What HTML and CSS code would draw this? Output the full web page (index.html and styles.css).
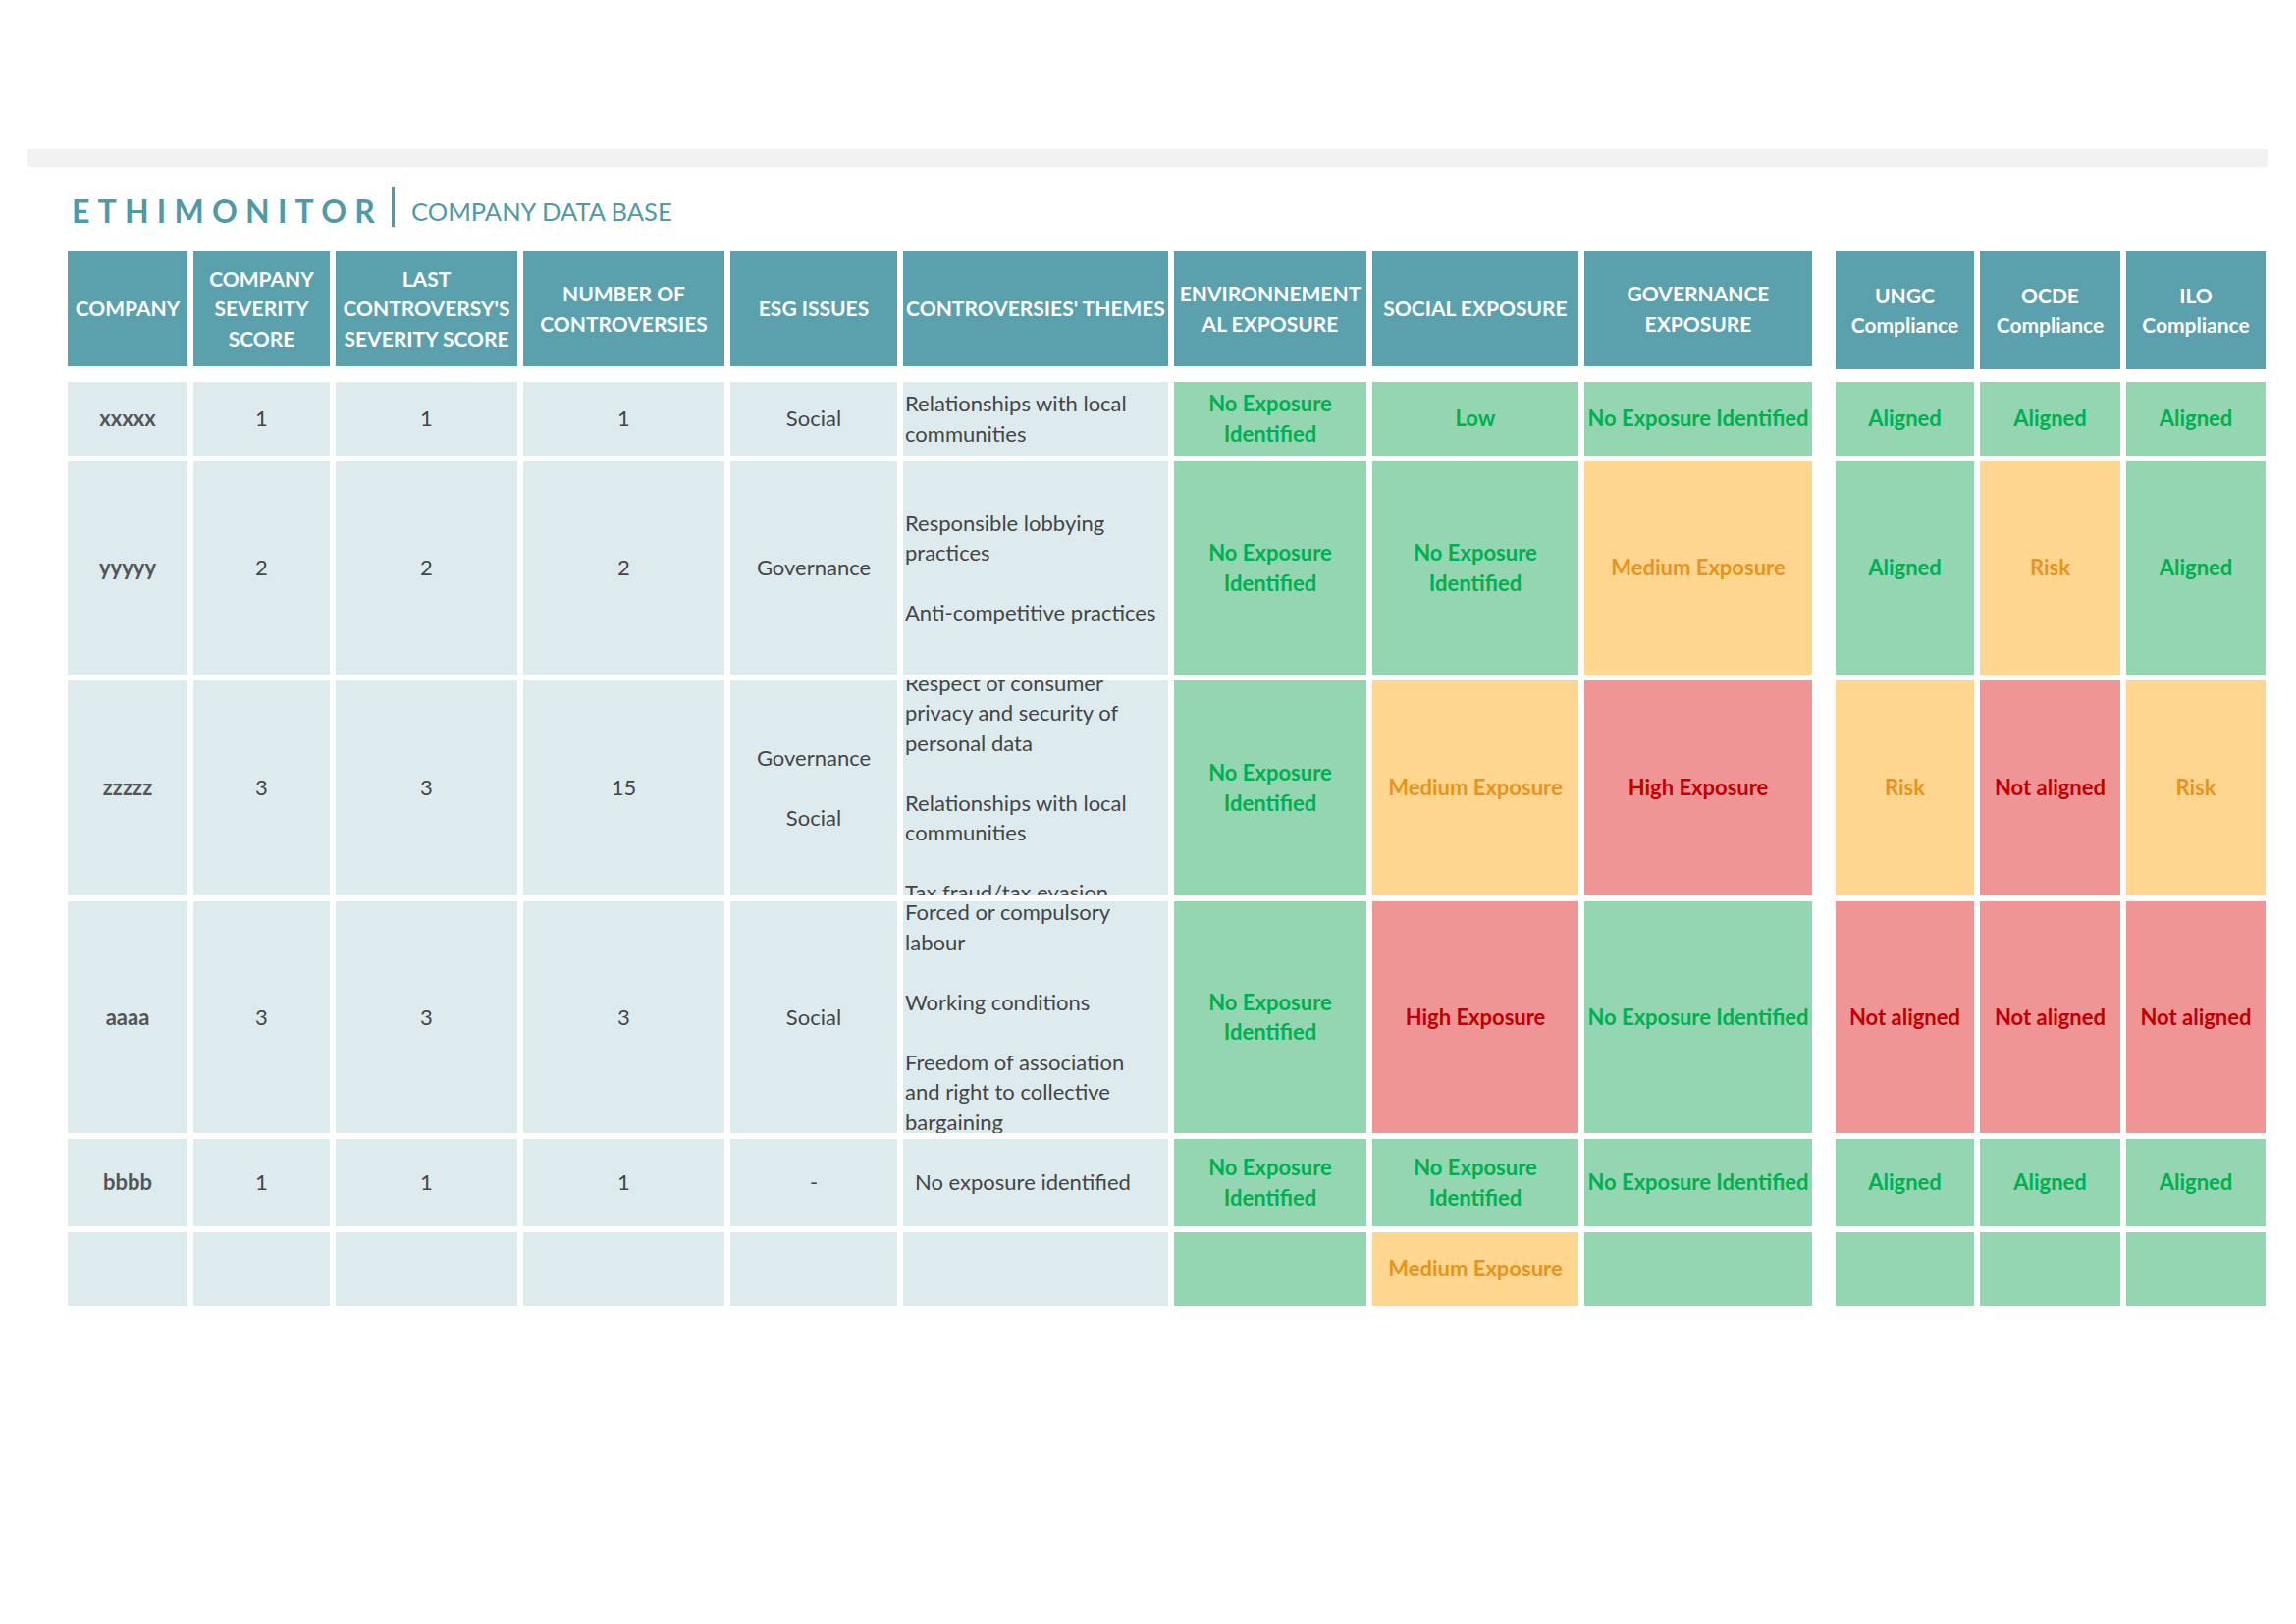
FILE: index.html
```html
<!DOCTYPE html>
<html lang="en">
<head>
<meta charset="utf-8">
<title>Ethimonitor – Company Data Base</title>
<link rel="stylesheet" href="styles.css">
</head>
<body>
<div class="page">
  <div class="topband"></div>
  <div class="brand">
    <span class="brand-name">ETHIMONITOR</span>
    <span class="brand-sep"></span>
    <span class="brand-sub">COMPANY DATA BASE</span>
  </div>

  <div class="board">
    <div class="grid grid-main">
      <div class="cell th">COMPANY</div>
      <div class="cell th">COMPANY<br>SEVERITY<br>SCORE</div>
      <div class="cell th">LAST<br>CONTROVERSY'S<br>SEVERITY SCORE</div>
      <div class="cell th">NUMBER OF<br>CONTROVERSIES</div>
      <div class="cell th">ESG ISSUES</div>
      <div class="cell th">CONTROVERSIES' THEMES</div>
      <div class="cell th">ENVIRONNEMENT<br>AL EXPOSURE</div>
      <div class="cell th">SOCIAL EXPOSURE</div>
      <div class="cell th">GOVERNANCE<br>EXPOSURE</div>

      <div class="cell td td-name">xxxxx</div>
      <div class="cell td">1</div>
      <div class="cell td">1</div>
      <div class="cell td">1</div>
      <div class="cell td">Social</div>
      <div class="cell td td-themes"><div><p>Relationships with local<br>communities</p></div></div>
      <div class="cell st st-green">No Exposure<br>Identified</div>
      <div class="cell st st-green">Low</div>
      <div class="cell st st-green">No Exposure Identified</div>

      <div class="cell td td-name">yyyyy</div>
      <div class="cell td">2</div>
      <div class="cell td">2</div>
      <div class="cell td">2</div>
      <div class="cell td">Governance</div>
      <div class="cell td td-themes"><div><p>Responsible lobbying<br>practices</p><p>Anti-competitive practices</p></div></div>
      <div class="cell st st-green">No Exposure<br>Identified</div>
      <div class="cell st st-green">No Exposure<br>Identified</div>
      <div class="cell st st-orange">Medium Exposure</div>

      <div class="cell td td-name">zzzzz</div>
      <div class="cell td">3</div>
      <div class="cell td">3</div>
      <div class="cell td">15</div>
      <div class="cell td"><div><p>Governance</p><p>Social</p></div></div>
      <div class="cell td td-themes"><div><p>Respect of consumer<br>privacy and security of<br>personal data</p><p>Relationships with local<br>communities</p><p>Tax fraud/tax evasion</p></div></div>
      <div class="cell st st-green">No Exposure<br>Identified</div>
      <div class="cell st st-orange">Medium Exposure</div>
      <div class="cell st st-red">High Exposure</div>

      <div class="cell td td-name">aaaa</div>
      <div class="cell td">3</div>
      <div class="cell td">3</div>
      <div class="cell td">3</div>
      <div class="cell td">Social</div>
      <div class="cell td td-themes"><div><p>Forced or compulsory<br>labour</p><p>Working conditions</p><p>Freedom of association<br>and right to collective<br>bargaining</p></div></div>
      <div class="cell st st-green">No Exposure<br>Identified</div>
      <div class="cell st st-red">High Exposure</div>
      <div class="cell st st-green">No Exposure Identified</div>

      <div class="cell td td-name">bbbb</div>
      <div class="cell td">1</div>
      <div class="cell td">1</div>
      <div class="cell td">1</div>
      <div class="cell td">-</div>
      <div class="cell td td-themes td-indent"><div><p>No exposure identified</p></div></div>
      <div class="cell st st-green">No Exposure<br>Identified</div>
      <div class="cell st st-green">No Exposure<br>Identified</div>
      <div class="cell st st-green">No Exposure Identified</div>

      <div class="cell td"></div>
      <div class="cell td"></div>
      <div class="cell td"></div>
      <div class="cell td"></div>
      <div class="cell td"></div>
      <div class="cell td"></div>
      <div class="cell st st-green"></div>
      <div class="cell st st-orange">Medium Exposure</div>
      <div class="cell st st-green"></div>
    </div>

    <div class="grid grid-comp">
      <div class="cell th">UNGC<br>Compliance</div>
      <div class="cell th">OCDE<br>Compliance</div>
      <div class="cell th">ILO<br>Compliance</div>

      <div class="cell st st-green">Aligned</div>
      <div class="cell st st-green">Aligned</div>
      <div class="cell st st-green">Aligned</div>

      <div class="cell st st-green">Aligned</div>
      <div class="cell st st-orange">Risk</div>
      <div class="cell st st-green">Aligned</div>

      <div class="cell st st-orange">Risk</div>
      <div class="cell st st-red">Not aligned</div>
      <div class="cell st st-orange">Risk</div>

      <div class="cell st st-red">Not aligned</div>
      <div class="cell st st-red">Not aligned</div>
      <div class="cell st st-red">Not aligned</div>

      <div class="cell st st-green">Aligned</div>
      <div class="cell st st-green">Aligned</div>
      <div class="cell st st-green">Aligned</div>

      <div class="cell st st-green"></div>
      <div class="cell st st-green"></div>
      <div class="cell st st-green"></div>
    </div>
  </div>
</div>
</body>
</html>
```

FILE: styles.css
```css
* { box-sizing: border-box; }

html, body {
  margin: 0;
  background: #ffffff;
}

body {
  font-family: "Lato", "Liberation Sans", sans-serif;
  color: #444444;
}

.page {
  width: 2339px;
  padding: 152px 29px 0 28px;
}

.topband {
  height: 18px;
  background: #f2f2f2;
}

.brand {
  display: flex;
  align-items: flex-end;
  height: 42px;
  margin: 20px 0 24px 45px;
  color: #4f9aa6;
}

.brand-name {
  font-size: 32px;
  font-weight: 700;
  letter-spacing: 8.2px;
  line-height: 32px;
  margin-bottom: 1px;
}

.brand-sep {
  width: 3px;
  height: 41px;
  margin: 0 17px 1px 9px;
  background: #4f9aa6;
}

.brand-sub {
  font-size: 25.5px;
  line-height: 25px;
  margin-bottom: 4px;
}

.board {
  display: flex;
  gap: 24px;
  margin-left: 41px;
}

.grid {
  display: grid;
  grid-template-rows: 127px 75px 217px 219px 236px 89px 75px;
  row-gap: 6px;
  column-gap: 6px;
}

.grid-main {
  grid-template-columns: 122px 139px 185px 205px 170px 270px 196px 210px 232px;
}

.grid-comp {
  grid-template-columns: 141px 143px 142px;
}

.cell {
  display: flex;
  align-items: center;
  justify-content: center;
  text-align: center;
  overflow: hidden;
  font-size: 22px;
  line-height: 30.5px;
}

.cell p {
  margin: 0;
}

.cell p + p {
  margin-top: 30.5px;
}

.th {
  align-self: start;
  height: 117px;
  background: #5ba1ad;
  color: #ffffff;
  font-size: 21px;
  font-weight: 700;
  white-space: nowrap;
}

.grid-comp .th {
  height: 120px;
}

.td {
  background: #ddebee;
  color: #454545;
}

.td-name {
  font-weight: 700;
  color: #555555;
}

.td-themes {
  justify-content: flex-start;
  text-align: left;
  padding-left: 2px;
}

.td-indent {
  padding-left: 12px;
}

.st {
  font-weight: 700;
  white-space: nowrap;
}

.st-green {
  background: #93d6b1;
  color: #00b050;
}

.st-orange {
  background: #fed68f;
  color: #e8931c;
}

.st-red {
  background: #f09595;
  color: #c00000;
}
```
